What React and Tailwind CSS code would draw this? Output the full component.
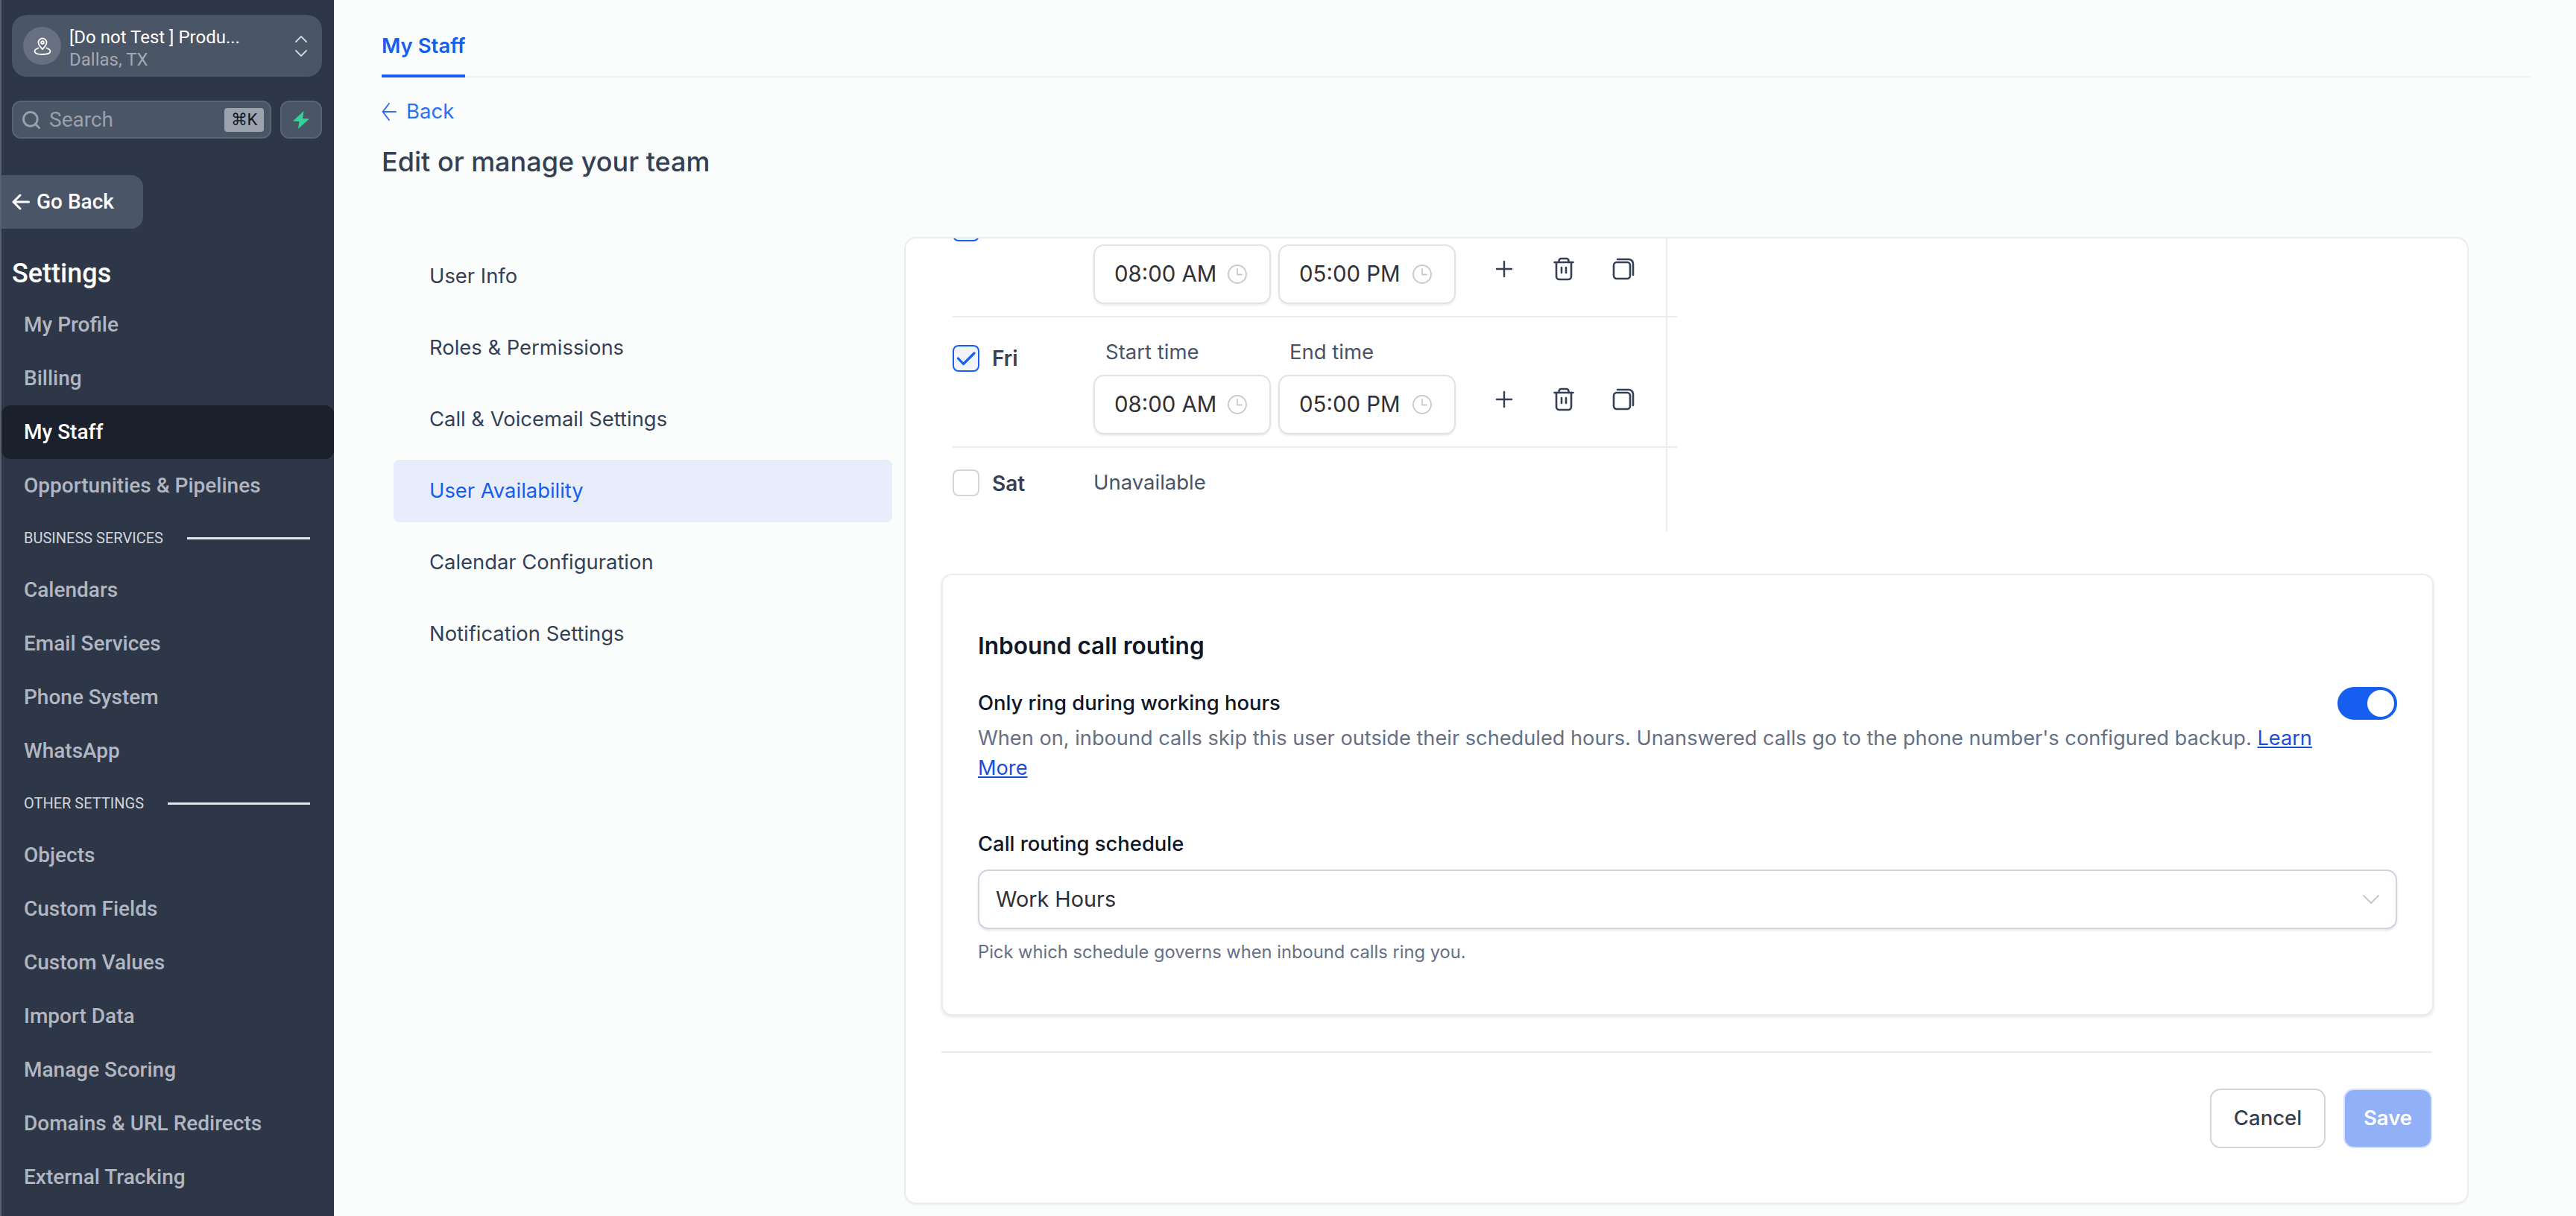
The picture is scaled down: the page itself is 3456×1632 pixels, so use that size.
import { Search } from 'lucide-react';
import React from 'react';

const MainLink = ({ label, active }) => (
  <div
    className={`h-[72px] flex items-center pl-[30px] rounded-[12px] text-[28px] font-medium ${
      active ? 'bg-[#1a202c] text-white' : 'text-[#b2b6c0]'
    }`}
  >
    {label}
  </div>
);

const SectionLabel = ({ label }) => (
  <div className="h-[68px] flex items-center pl-[30px] pr-[32px] gap-[32px]">
    <span className="text-[20px] uppercase text-[#d1d5db] whitespace-nowrap">{label}</span>
    <div className="flex-1 h-[3px] bg-[#e5e7eb]" />
  </div>
);

const PlusIcon = () => (
  <svg width="24" height="24" viewBox="0 0 24 24" fill="none" stroke="#344054" strokeWidth="2.4" strokeLinecap="round">
    <path d="M12 2v20M2 12h20" />
  </svg>
);

const TrashIcon = () => (
  <svg width="28" height="32" viewBox="0 0 28 32" fill="none" stroke="#344054" strokeWidth="2.6" strokeLinecap="round" strokeLinejoin="round">
    <path d="M1.500 7h25" />
    <path d="M7.500 7V5a3 3 0 0 1 3-3h7a3 3 0 0 1 3 3v2" />
    <path d="M4 7v19a4 4 0 0 0 4 4h12a4 4 0 0 0 4-4V7" />
    <path d="M11 14v7M17 14v7" />
  </svg>
);

const CopyIcon = () => (
  <svg width="30" height="30" viewBox="0 0 30 30" fill="none" stroke="#344054" strokeWidth="2.6" strokeLinecap="round" strokeLinejoin="round">
    <rect x="2" y="6" width="22" height="22" rx="4" />
    <path d="M7 2h15a6 6 0 0 1 6 6v15" />
  </svg>
);

const ClockIcon = () => (
  <svg width="26" height="26" viewBox="0 0 26 26" fill="none" stroke="#c9c9cb" strokeWidth="1.800" strokeLinecap="round" strokeLinejoin="round" className="shrink-0">
    <circle cx="13" cy="13" r="12" />
    <path d="M13 6v7.500h6" />
  </svg>
);

const TimeInput = ({ value }) => (
  <div className="w-[238px] h-[80px] flex items-center justify-between pl-[26px] pr-[30px] bg-white border-2 border-[#e0e2e8] rounded-[14px] shadow-[0_2px_3px_rgba(16,24,40,0.08)]">
    <span className="text-[29.4px] text-[#2f3136] whitespace-nowrap">{value}</span>
    <ClockIcon />
  </div>
);

const Checkbox = ({ checked }) => (
  <div
    className={`w-[36px] h-[36px] rounded-[8px] border-2 flex items-center justify-center ${
      checked ? 'border-[#155eef] bg-[#f2f4f9]' : 'border-[#d0d5dd] bg-white'
    }`}
  >
    {checked && (
      <svg width="26" height="20" viewBox="0 0 26 20" fill="none" stroke="#155eef" strokeWidth="3.200" strokeLinecap="round" strokeLinejoin="round">
        <path d="M2.500 10l7 7.500L24 3" />
      </svg>
    )}
  </div>
);

const DayRow = ({ day }) => (
  <div className="w-[972px] h-[175px] flex border-b-2 border-[#eaecf0]">
    <div className="w-[189px] h-[73px] pt-[37px] flex items-start gap-[17px]">
      <Checkbox checked />
      <span className="text-[28px] leading-[36px] font-semibold text-[#344054]">{day}</span>
    </div>
    <div className="flex flex-col pt-[28px]">
      <div className="flex h-[36px] text-[27.5px] leading-[36px] text-[#475467]">
        <span className="w-[249px] pl-[16px]">Start time</span>
        <span className="pl-[14px]">End time</span>
      </div>
      <div className="flex items-start mt-[13px]">
        <div className="flex gap-[10px]">
          <TimeInput value="08:00 AM" />
          <TimeInput value="05:00 PM" />
        </div>
        <div className="flex items-center h-[66px] ml-[25px]">
          <div className="w-[80px] flex justify-center">
            <PlusIcon />
          </div>
          <div className="w-[80px] flex justify-center">
            <TrashIcon />
          </div>
          <div className="w-[80px] flex justify-center">
            <CopyIcon />
          </div>
        </div>
      </div>
    </div>
  </div>
);

const menuItems = ['User Info', 'Roles & Permissions', 'Call & Voicemail Settings', 'User Availability', 'Calendar Configuration', 'Notification Settings'];

export default function App() {
  return (
    <div className="w-[3456px] h-[1632px] flex overflow-hidden bg-[#fbfdfd] font-[Inter,sans-serif]">
      {/* Sidebar */}
      <aside className="w-[448px] h-full shrink-0 bg-[#2d3748] border-l-2 border-[#56606e] flex flex-col overflow-hidden pt-[20px] font-[Roboto,sans-serif]">
        <div className="ml-[14px] w-[416px] h-[83px] rounded-[20px] bg-[#4a5565] flex items-center pl-[15px] pr-[20px]">
          <div className="w-[51px] h-[51px] rounded-full bg-[#667080] flex items-center justify-center shrink-0">
            <svg width="26" height="26" viewBox="0 0 26 26" fill="none" stroke="white" strokeWidth="1.800" strokeLinecap="round" strokeLinejoin="round">
              <path d="M13 17c-3-3-5.500-5.500-5.500-9a5.500 5.500 0 0 1 11 0c0 3.500-2.500 6-5.500 9z" />
              <circle cx="13" cy="8" r="1.800" />
              <path d="M7.500 15.500C4.500 16.500 2.500 18 2.500 20c0 2.500 4.500 4 10.500 4s10.500-1.500 10.500-4c0-2-2-3.500-5-4.500" />
            </svg>
          </div>
          <div className="ml-[11px] pt-[6px] flex-1 min-w-0 text-[24px] leading-[30px]">
            <div className="text-white whitespace-nowrap">[Do not Test ] Produ...</div>
            <div className="text-[#a3a9b3]">Dallas, TX</div>
          </div>
          <svg width="16" height="30" viewBox="0 0 16 30" fill="none" stroke="#d1d5db" strokeWidth="1.800" strokeLinecap="round" strokeLinejoin="round">
            <path d="M1 9l7-7 7 7M1 21l7 7 7-7" />
          </svg>
        </div>

        <div className="ml-[14px] w-[416px] mt-[32px] flex gap-[12px]">
          <div className="flex-1 h-[51px] rounded-[12px] bg-[#4a5565] border-2 border-[#5a6473] flex items-center pl-[10px] pr-[8px]">
            <Search size={28} strokeWidth={2.500} className="text-[#9aa0aa]" />
            <span className="ml-[10px] text-[28px] text-[#9aa0aa]">Search</span>
            <span className="ml-auto w-[53px] h-[32px] rounded-[4px] bg-[#9ca3af] flex items-center justify-center text-[22px] text-[#111827]">⌘K</span>
          </div>
          <div className="w-[56px] h-[51px] rounded-[12px] bg-[#4a5565] border-2 border-[#5a6473] flex items-center justify-center">
            <svg width="22" height="24" viewBox="0 0 22 24" fill="#34d399">
              <path d="M14.500 0L0 13.500L8.500 14L7 24L22 10.500L13 10Z" />
            </svg>
          </div>
        </div>

        <div className="mt-[49px] w-[190px] h-[72px] rounded-r-[16px] bg-[#4a5568] flex items-center pl-[14px] gap-[9px] text-white text-[28px] font-medium">
          <svg width="24" height="22" viewBox="0 0 24 22" fill="none" stroke="white" strokeWidth="3" strokeLinecap="round" strokeLinejoin="round">
            <path d="M22.500 11H2M11 2l-9 9 9 9" />
          </svg>
          Go Back
        </div>

        <div className="mt-[32px] h-[56px] pl-[14px] flex items-center text-[36px] font-medium text-white">Settings</div>

        <nav className="mt-[5px]">
          <MainLink label="My Profile" />
          <MainLink label="Billing" />
          <MainLink label="My Staff" active />
          <MainLink label="Opportunities & Pipelines" />
          <SectionLabel label="Business Services" />
          <MainLink label="Calendars" />
          <MainLink label="Email Services" />
          <MainLink label="Phone System" />
          <MainLink label="WhatsApp" />
          <SectionLabel label="Other Settings" />
          <MainLink label="Objects" />
          <MainLink label="Custom Fields" />
          <MainLink label="Custom Values" />
          <MainLink label="Import Data" />
          <MainLink label="Manage Scoring" />
          <MainLink label="Domains & URL Redirects" />
          <MainLink label="External Tracking" />
        </nav>
      </aside>

      {/* Main */}
      <main className="flex-1 min-w-0 pl-[64px]">
        <div className="w-[2883px] h-[104px] border-b-2 border-[#eff0f5]">
          <div className="inline-block h-[104px] pt-[43px] border-b-4 border-[#155eef] text-[27.500px] leading-[36px] font-semibold text-[#155eef]">My Staff</div>
        </div>

        <div className="mt-[28px] h-[36px] flex items-center gap-[13px] text-[#2e6df6] text-[27.500px]">
          <svg width="20" height="30" viewBox="0 0 20 30" fill="none" stroke="currentColor" strokeWidth="2" strokeLinecap="round" strokeLinejoin="round">
            <path d="M19 15H2M10 4L1.500 15L10 26" />
          </svg>
          Back
        </div>

        <h1 className="mt-[25px] h-[48px] text-[36px] leading-[48px] font-medium text-[#344054]">Edit or manage your team</h1>

        <div className="mt-[77px] flex">
          <div className="ml-[16px] w-[669px] mt-[11px] flex flex-col gap-[12px]">
            {menuItems.map((item) => (
              <div
                key={item}
                className={`h-[84px] flex items-center pl-[48px] rounded-[8px] text-[27.400px] ${
                  item === 'User Availability' ? 'bg-[#e8edfc] text-[#155eef]' : 'text-[#344054]'
                }`}
              >
                {item}
              </div>
            ))}
          </div>

          {/* Availability card */}
          <div className="ml-[16px] w-[2099px] h-[1298px] bg-white border-2 border-[#eaecf0] rounded-[16px] overflow-hidden shadow-[0_2px_0_rgba(16,24,40,0.04)]">
            <div className="ml-[63px] -mt-[69px] w-[959px] border-r-2 border-[#eaecf0]">
              <DayRow day="Thu" />
              <DayRow day="Fri" />
              <div className="w-[972px] h-[112px] flex pt-[29px]">
                <div className="w-[189px] flex items-start gap-[17px]">
                  <Checkbox />
                  <span className="text-[28px] leading-[38px] font-semibold text-[#344054]">Sat</span>
                </div>
                <span className="text-[27.500px] leading-[34px] text-[#475467]">Unavailable</span>
              </div>
            </div>

            <div className="ml-[48px] mt-[57px] w-[2002px] h-[593px] bg-white border-2 border-[#eaecf0] rounded-[14px] pl-[47px] pr-[47px] pt-[75px] shadow-[0_2px_4px_rgba(16,24,40,0.1)]">
              <div className="text-[31.600px] leading-[40px] font-semibold text-[#101828]">Inbound call routing</div>
              <div className="mt-[38px] flex justify-between items-start">
                <div className="w-[1803px]">
                  <div className="text-[27.400px] leading-[36px] font-medium text-[#101828]">Only ring during working hours</div>
                  <p className="mt-[10px] text-[27.200px] leading-[40px] text-[#667085]">
                    When on, inbound calls skip this user outside their scheduled hours. Unanswered calls go to the phone number's configured backup.{' '}
                    <a className="text-[#1d4ed8] underline">Learn More</a>
                  </p>
                </div>
                <div className="w-[80px] h-[44px] -mt-[3px] rounded-full bg-[#155eef] flex items-center justify-end pr-[4px]">
                  <div className="w-[36px] h-[36px] rounded-full bg-white" />
                </div>
              </div>

              <div className="mt-[63px] text-[27.400px] leading-[36px] font-medium text-[#101828]">Call routing schedule</div>
              <div className="mt-[17px] h-[80px] flex items-center justify-between pl-[22px] pr-[22px] bg-white border-2 border-[#d0d5dd] rounded-[14px] shadow-[0_2px_3px_rgba(16,24,40,0.1)]">
                <span className="text-[28.800px] text-[#2f3136]">Work Hours</span>
                <svg width="22" height="12" viewBox="0 0 22 12" fill="none" stroke="#c4c6ca" strokeWidth="1.800" strokeLinecap="round" strokeLinejoin="round">
                  <path d="M1 1l10 10L21 1" />
                </svg>
              </div>
              <p className="mt-[15px] text-[23.700px] leading-[32px] text-[#667085]">Pick which schedule governs when inbound calls ring you.</p>
            </div>

            <div className="ml-[48px] mt-[48px] w-[2000px] h-[2px] bg-[#eaecf0]" />

            <div className="ml-[48px] mt-[48px] w-[2000px] flex justify-end gap-[24px]">
              <div className="w-[155px] h-[80px] rounded-[14px] bg-white border-2 border-[#d0d5dd] flex items-center justify-center text-[27.500px] font-medium text-[#344054]">Cancel</div>
              <div className="w-[119px] h-[80px] rounded-[14px] bg-[#91b0f7] border-2 border-[#d6e2fb] flex items-center justify-center text-[27.500px] font-semibold text-white">Save</div>
            </div>
          </div>
        </div>
      </main>
    </div>
  );
}
